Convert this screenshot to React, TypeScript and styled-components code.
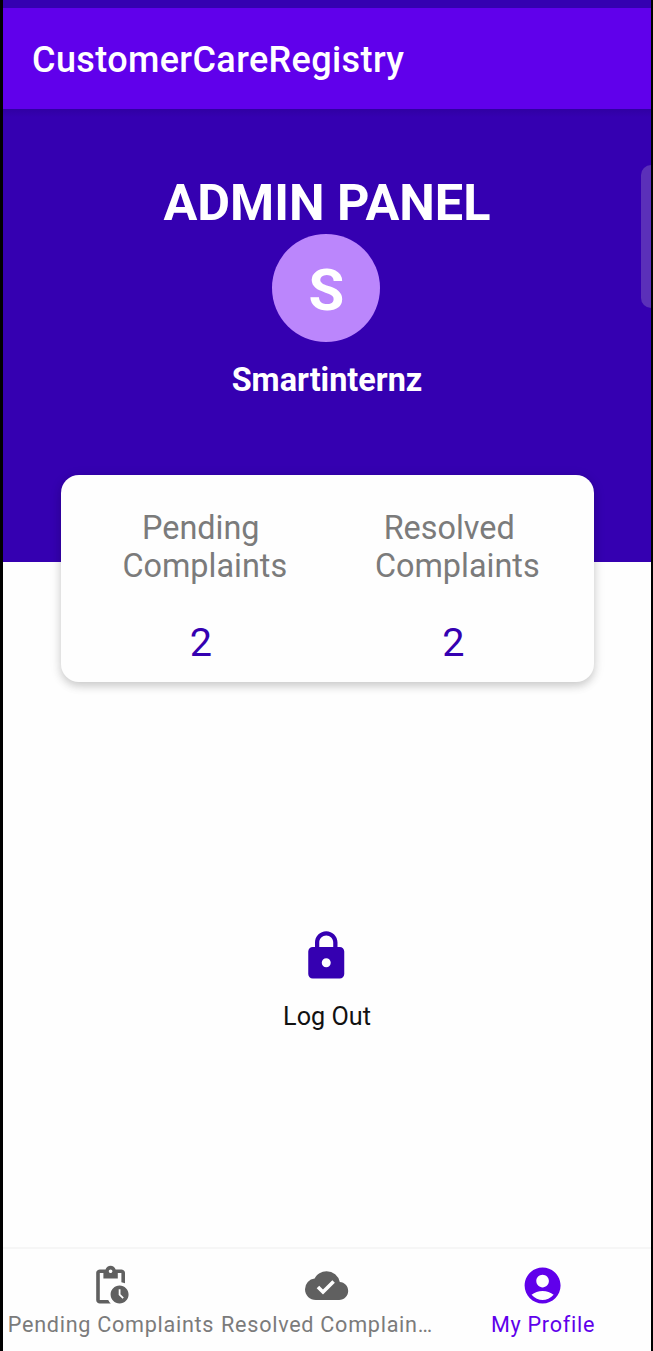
import React from "react";
import styled, { createGlobalStyle } from "styled-components";
import { MdCloudDone, MdLock, MdPendingActions } from "react-icons/md";

const color = {
  primary: "#6000eb",
  primaryDark: "#3500b1",
  avatar: "#bb86fc",
  muted: "#7b7b7b",
  icon: "#606060",
};

const GlobalStyle = createGlobalStyle`
  * { box-sizing: border-box; }
  body {
    margin: 0;
    background: #000;
    font-family: Roboto, "Liberation Sans", sans-serif;
  }
`;

const Screen = styled.div`
  position: relative;
  display: flex;
  flex-direction: column;
  width: 648px;
  height: 1351px;
  margin-left: 3px;
  overflow: hidden;
  background: #fefefe;
`;

const StatusBar = styled.div`
  flex: none;
  height: 8px;
  background: ${color.primaryDark};
`;

const AppBar = styled.header`
  flex: none;
  display: flex;
  align-items: center;
  height: 101px;
  padding: 3px 29px 0;
  background: ${color.primary};
  color: #fff;
`;

const AppTitle = styled.h1`
  margin: 0;
  font-size: 36px;
  font-weight: 500;
  line-height: 42px;
  letter-spacing: 0.38px;
`;

const Hero = styled.section`
  flex: none;
  display: flex;
  flex-direction: column;
  align-items: center;
  height: 452.5px;
  padding-top: 63px;
  background: linear-gradient(#3000a3, ${color.primaryDark} 8px);
  color: #fff;
`;

const PanelTitle = styled.h2`
  margin: 0;
  font-size: 50.4px;
  font-weight: 700;
  line-height: 61.5px;
  white-space: nowrap;
`;

const Avatar = styled.div`
  display: flex;
  align-items: center;
  justify-content: center;
  width: 108px;
  height: 108px;
  margin-right: 1.4px;
  padding-top: 4px;
  border-radius: 50%;
  background: ${color.avatar};
  font-size: 58px;
  font-weight: 700;
`;

const UserName = styled.div`
  margin-top: 19.5px;
  font-size: 32.4px;
  font-weight: 700;
  line-height: 38px;
`;

const StatsCard = styled.section`
  flex: none;
  display: flex;
  width: 533px;
  height: 206.5px;
  margin: -86.5px 0 0 57.5px;
  padding: 34px 14px 0;
  border-radius: 18px;
  background: #fefefe;
  box-shadow: 0 4px 8px rgba(0, 0, 0, 0.16), 0 2px 14px rgba(0, 0, 0, 0.08);
`;

const Stat = styled.div`
  flex: 1;
  display: flex;
  flex-direction: column;
  align-items: center;
`;

const StatLabel = styled.div`
  color: ${color.muted};
  font-size: 32.4px;
  line-height: 38px;
  text-align: center;
  white-space: pre;
`;

const StatValue = styled.div`
  margin-top: 35px;
  color: ${color.primaryDark};
  font-size: 39.6px;
  line-height: 46px;
`;

const LogOut = styled.button`
  display: flex;
  flex-direction: column;
  align-items: center;
  align-self: center;
  margin: 247px 0 0;
  padding: 0;
  border: 0;
  background: none;
  color: #111;
  font: 25.2px/30px Roboto, "Liberation Sans", sans-serif;

  svg {
    width: 54.5px;
    height: 54px;
    margin: 0 1.4px 19px 0;
    color: ${color.primaryDark};
  }
`;

const BottomNav = styled.nav`
  flex: none;
  display: flex;
  height: 104px;
  margin-top: auto;
  border-top: 2px solid #f6f6f6;
`;

const NavItem = styled.a<{ $active?: boolean }>`
  flex: 1;
  min-width: 0;
  display: flex;
  flex-direction: column;
  align-items: center;
  padding-top: 15px;
  color: ${(p) => (p.$active ? color.primary : color.icon)};

  svg {
    flex: none;
    width: 43.2px;
    height: 43.2px;
  }
`;

const NavLabel = styled.span<{ $active?: boolean }>`
  max-width: 214px;
  margin-top: 5px;
  overflow: hidden;
  color: ${(p) => (p.$active ? color.primary : color.muted)};
  font-size: 21.6px;
  line-height: 26px;
  letter-spacing: 0.72px;
  text-overflow: ellipsis;
  white-space: nowrap;
`;

const EdgeHandle = styled.div`
  position: absolute;
  top: 165px;
  right: 0;
  width: 10px;
  height: 143px;
  border-radius: 10px 0 0 10px;
  background: #5b30b9;
`;

const ProfileIcon = () => (
  <svg viewBox="0 0 24 24" fill="currentColor">
    <path d="M12 2C6.48 2 2 6.48 2 12s4.48 10 10 10 10-4.48 10-10S17.52 2 12 2zm0 4c1.93 0 3.5 1.57 3.5 3.5S13.93 13 12 13s-3.5-1.57-3.5-3.5S10.07 6 12 6zm0 14c-2.03 0-4.43-.82-6.14-2.88C7.55 15.8 9.68 15 12 15s4.45.8 6.14 2.12C16.43 19.18 14.03 20 12 20z" />
  </svg>
);

const stats = [
  { label: "Pending\n Complaints", value: 2 },
  { label: "Resolved \n Complaints", value: 2 },
];

const navItems = [
  { label: "Pending Complaints", Icon: MdPendingActions, active: false },
  { label: "Resolved Complain…", Icon: MdCloudDone, active: false },
  { label: "My Profile", Icon: ProfileIcon, active: true },
];

export default function App() {
  return (
    <>
      <GlobalStyle />
      <Screen>
        <StatusBar />
        <AppBar>
          <AppTitle>CustomerCareRegistry</AppTitle>
        </AppBar>
        <Hero>
          <PanelTitle>ADMIN PANEL</PanelTitle>
          <Avatar>S</Avatar>
          <UserName>Smartinternz</UserName>
        </Hero>
        <StatsCard>
          {stats.map((s) => (
            <Stat key={s.label}>
              <StatLabel>{s.label}</StatLabel>
              <StatValue>{s.value}</StatValue>
            </Stat>
          ))}
        </StatsCard>
        <LogOut>
          <MdLock />
          Log Out
        </LogOut>
        <BottomNav>
          {navItems.map(({ label, Icon, active }) => (
            <NavItem key={label} $active={active}>
              <Icon />
              <NavLabel $active={active}>{label}</NavLabel>
            </NavItem>
          ))}
        </BottomNav>
        <EdgeHandle />
      </Screen>
    </>
  );
}
